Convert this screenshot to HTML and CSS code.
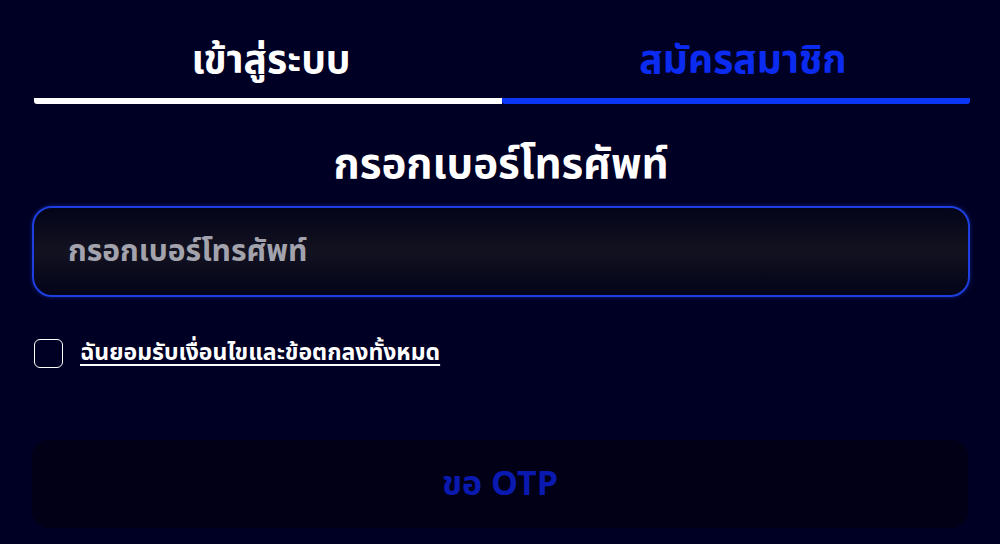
FILE: index.html
```html
<!DOCTYPE html>
<html lang="th">
<head>
<meta charset="utf-8">
<title>สมัครสมาชิก</title>
<link rel="stylesheet" href="styles.css">
</head>
<body>
<div class="page">
  <div class="tabs">
    <div class="tab tab-active">เข้าสู่ระบบ</div>
    <div class="tab tab-blue">สมัครสมาชิก</div>
  </div>
  <h1 class="heading">กรอกเบอร์โทรศัพท์</h1>
  <div class="field">
    <input class="phone" type="text" placeholder="กรอกเบอร์โทรศัพท์">
  </div>
  <label class="agree">
    <span class="box"></span>
    <span class="agree-text">ฉันยอมรับเงื่อนไขและข้อตกลงทั้งหมด</span>
  </label>
  <button class="otp" type="button">ขอ OTP</button>
</div>
</body>
</html>
```
FILE: styles.css
```css
html, body {
  margin: 0;
  padding: 0;
  background: #000025;
}
body {
  font-family: "Noto Sans Thai", "Noto Sans", "DejaVu Sans", sans-serif;
  color: #fff;
  width: 1000px;
  height: 544px;
  overflow: hidden;
}
.page {
  padding: 0 30px 0 32px;
  display: flex;
  flex-direction: column;
}
.tabs {
  display: grid;
  grid-template-columns: 1fr 1fr;
  margin: 30px 0 0 2px;
}
.tab {
  box-sizing: border-box;
  text-align: center;
  font-size: 39px;
  font-weight: 700;
  line-height: 64px;
  padding-bottom: 4px;
  border-bottom: 6px solid #fff;
}
.tab-active {
  border-radius: 3px 0 0 3px;
  padding-left: 6px;
}
.tab-blue {
  color: #0b2cf0;
  border-bottom-color: #0a36f5;
  border-radius: 3px;
  padding-left: 14px;
}
.heading {
  margin: 36px 0 0;
  text-align: center;
  font-size: 42px;
  font-weight: 700;
  line-height: 50px;
}
.field {
  margin-top: 16px;
}
.phone {
  box-sizing: border-box;
  width: 938px;
  height: 91px;
  border: 2px solid #1e3fe0;
  border-radius: 20px;
  background: linear-gradient(180deg, #04041a 0%, #121220 50%, #03031a 100%);
  padding: 0 34px;
  font-family: inherit;
  font-size: 30px;
  font-weight: 700;
  color: #fff;
  outline: none;
  box-shadow: 0 0 4px rgba(30, 63, 224, 0.5);
}
.phone::placeholder {
  color: #a3a3ad;
}
.agree {
  display: flex;
  align-items: center;
  gap: 17px;
  margin: 41px 0 0 2px;
}
.box {
  width: 27px;
  height: 27px;
  border: 1.5px solid #fff;
  border-radius: 6px;
  flex: none;
}
.agree-text {
  font-size: 23px;
  font-weight: 700;
  line-height: 30px;
  text-decoration: underline;
  text-underline-offset: 4px;
}
.otp {
  margin-top: 72px;
  width: 936px;
  height: 88px;
  border: none;
  border-radius: 16px;
  background: #020016;
  color: #0a1ab0;
  font-family: inherit;
  font-size: 34px;
  font-weight: 700;
  padding: 0;
}
```
